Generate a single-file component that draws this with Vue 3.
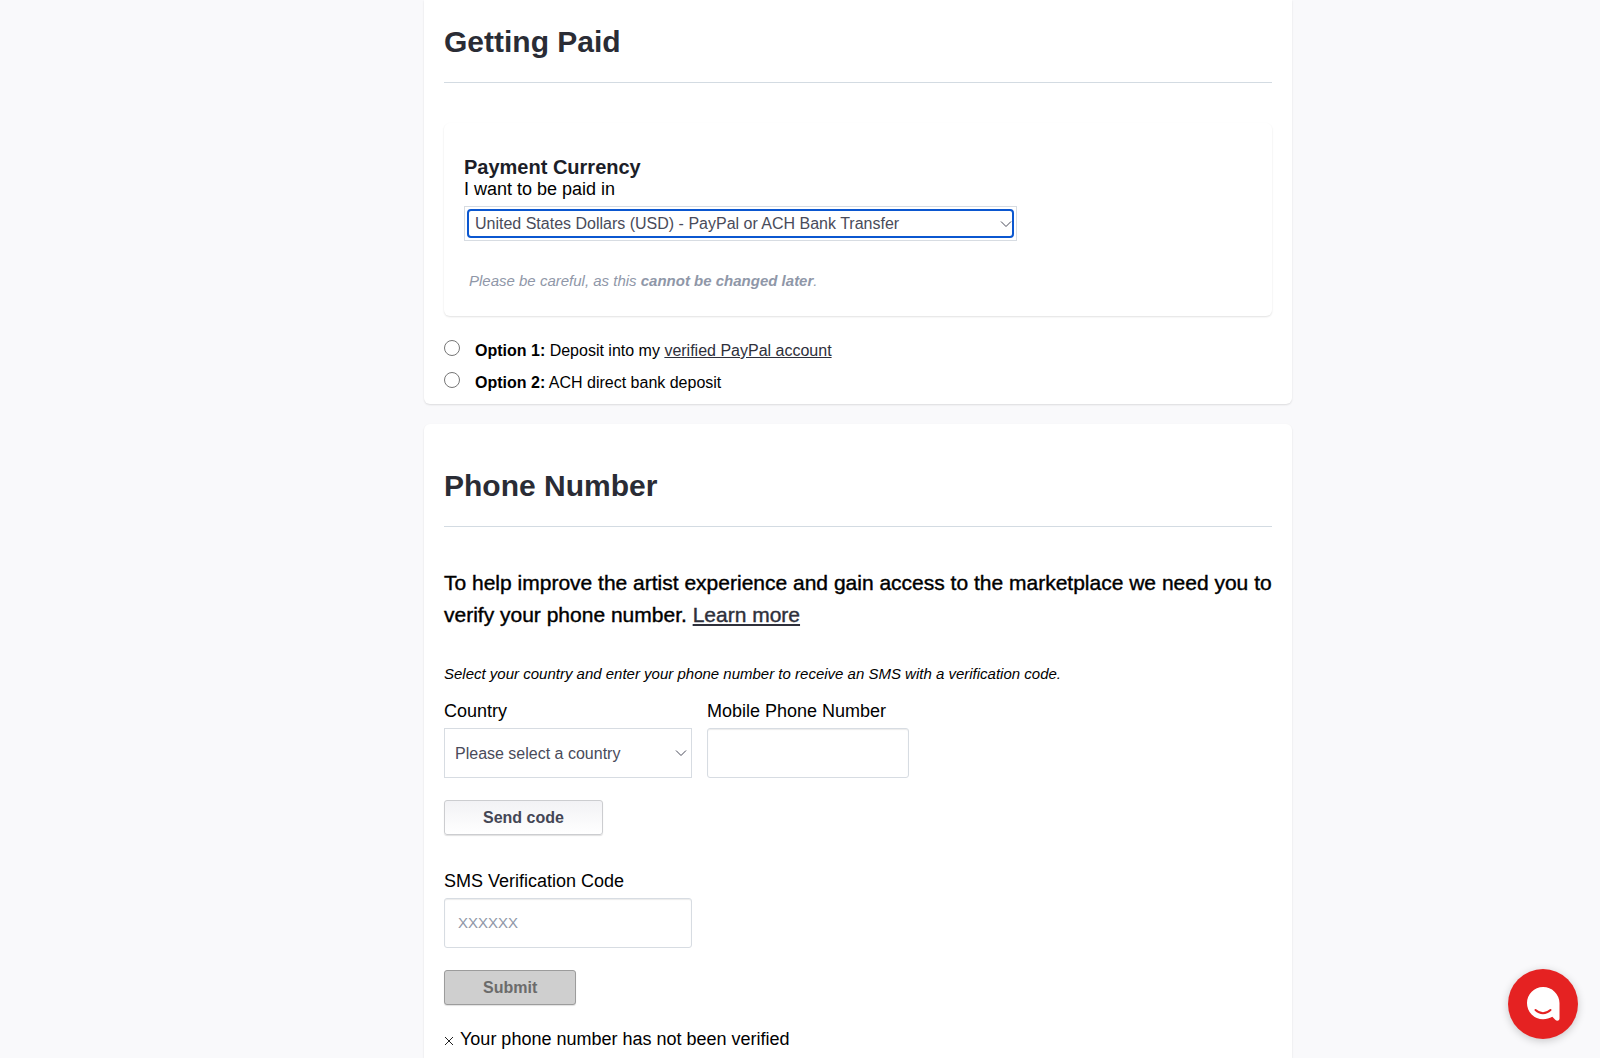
<script setup>
import { ref } from "vue";

const currencies = [
  { code: "USD", label: "United States Dollars (USD) - PayPal or ACH Bank Transfer" },
];
const countries = ["Australia", "Canada", "United Kingdom", "United States"];

const currency = ref("USD");
const payout = ref("");
const country = ref("");
const phone = ref("");
const code = ref("");
</script>

<template>
  <div class="page">
    <main class="content">
      <section class="card card-first">
        <h2>Getting Paid</h2>

        <div class="currency">
          <h3>Payment Currency</h3>
          <label class="label" for="currency">I want to be paid in</label>
          <div class="select select-focus">
            <select id="currency" v-model="currency">
              <option v-for="c in currencies" :key="c.code" :value="c.code">{{ c.label }}</option>
            </select>
            <svg class="chevron" viewBox="0 0 12 8"><path d="M1 1.5l5 5 5-5" /></svg>
          </div>
          <p class="warning">Please be careful, as this <strong>cannot be changed later</strong>.</p>
        </div>

        <div class="options">
          <div class="option">
            <input id="paypal" v-model="payout" type="radio" name="payout" value="paypal" />
            <label for="paypal"><strong>Option 1:</strong> Deposit into my <a href="#">verified PayPal account</a></label>
          </div>
          <div class="option">
            <input id="ach" v-model="payout" type="radio" name="payout" value="ach" />
            <label for="ach"><strong>Option 2:</strong> ACH direct bank deposit</label>
          </div>
        </div>
      </section>

      <section class="card card-last">
        <h2>Phone Number</h2>

        <p class="intro">
          To help improve the artist experience and gain access to the marketplace we need you to
          verify your phone number. <a href="#">Learn more</a>
        </p>
        <p class="hint">Select your country and enter your phone number to receive an SMS with a verification code.</p>

        <div class="fields">
          <div class="field">
            <label class="label" for="country">Country</label>
            <div class="select select-country">
              <select id="country" v-model="country">
                <option value="">Please select a country</option>
                <option v-for="c in countries" :key="c" :value="c">{{ c }}</option>
              </select>
              <svg class="chevron" viewBox="0 0 12 8"><path d="M1 1.5l5 5 5-5" /></svg>
            </div>
          </div>
          <div class="field field-phone">
            <label class="label" for="phone">Mobile Phone Number</label>
            <input id="phone" v-model="phone" class="text" type="tel" />
          </div>
        </div>
        <button type="button" class="btn">Send code</button>

        <div class="field field-code">
          <label class="label" for="code">SMS Verification Code</label>
          <input id="code" v-model="code" class="text" type="text" placeholder="XXXXXX" />
        </div>
        <button type="button" class="btn" disabled>Submit</button>

        <p class="status">
          <svg viewBox="0 0 10 10"><path d="M1 1l8 8M9 1l-8 8" /></svg>
          Your phone number has not been verified
        </p>
      </section>
    </main>

    <button type="button" class="chat" aria-label="Chat">
      <svg viewBox="0 0 34 36">
        <path
          d="M17 1A16 16 0 0 0 1 17a16 16 0 0 0 16 16.200c3.500 0 6.500-.8 9.300-2.400l3.200 3.200c1.500 1.300 4 .6 4-1.600V17A16.400 16.400 0 0 0 17 1z"
          fill="#fff"
        />
        <path d="M9.500 24c4.500 4.200 10.500 4.200 15 0" fill="none" stroke="#e52222" stroke-width="2" stroke-linecap="round" />
      </svg>
    </button>
  </div>
</template>

<style>
body {
  margin: 0;
  background: #f9f9fb;
}
</style>

<style scoped>
* {
  box-sizing: border-box;
}

.page {
  min-height: 100vh;
  display: flex;
  font-family: "Helvetica Neue", "Liberation Sans", Arial, sans-serif;
  font-size: 16px;
  color: #000;
}

.content {
  width: 100%;
  max-width: 984px;
  margin: 0 auto;
  padding-left: 116px;
  display: flex;
  flex-direction: column;
  gap: 20px;
}

.card {
  padding: 40px 20px 6px;
  background: #fff;
  border-radius: 6px;
  box-shadow: 0 1px 2px rgba(0, 0, 0, 0.12);
}

.card-first {
  padding-top: 20px;
  border-radius: 0 0 6px 6px;
}

.card-last {
  flex: 1;
  border-radius: 6px 6px 0 0;
}

h2 {
  margin: 0 0 40px;
  padding-bottom: 18px;
  border-bottom: 1px solid #d3dbe2;
  font-size: 30px;
  line-height: 44px;
  color: #2a2c35;
}

h3,
p {
  margin: 0;
}

h3 {
  font-size: 20px;
  line-height: 22px;
  color: #1c1e28;
}

a {
  color: #2e303b;
}

.label {
  display: block;
  font-size: 18px;
  line-height: 22px;
}

.currency {
  padding: 33px 20px 25px;
  border-radius: 6px;
  box-shadow: 0 1px 2px rgba(0, 0, 0, 0.12);
}

.select {
  position: relative;
  border: 1px solid #d7dce2;
}

.select select {
  width: 100%;
  height: 100%;
  display: block;
  appearance: none;
  border: none;
  outline: none;
  background: #fff;
  padding: 0 28px 0 10px;
  font: inherit;
  color: #494b5a;
}

.select-focus {
  max-width: 553px;
  height: 35px;
  margin-top: 6px;
  padding: 2px;
}

.select-focus select {
  border: 2px solid #0b57d0;
  border-radius: 4px;
  padding-left: 6px;
}

.chevron {
  position: absolute;
  right: 4px;
  top: 50%;
  width: 12px;
  height: 8px;
  margin-top: -4px;
  fill: none;
  stroke: #494b5a;
  pointer-events: none;
}

.warning {
  margin-top: 30px;
  padding-left: 5px;
  font-size: 15px;
  line-height: 20px;
  font-style: italic;
  color: #8f97a8;
}

.options {
  padding-top: 18px;
}

.option {
  display: flex;
  height: 32px;
}

.option input {
  width: 16px;
  height: 16px;
  margin: 6px 15px 0 0;
}

.option label {
  line-height: 34px;
}

.intro {
  font-size: 21px;
  line-height: 32px;
  -webkit-text-stroke: 0.4px;
}

.hint {
  margin-top: 33px;
  font-size: 15px;
  line-height: 20px;
  font-style: italic;
}

.fields {
  display: flex;
  gap: 15px;
  margin: 16px 0 22px;
}

.field {
  width: 248px;
}

.field-phone {
  width: 202px;
}

.field-code {
  margin: 35px 0 22px;
}

.select-country,
.text {
  width: 100%;
  height: 50px;
  margin-top: 6px;
}

.text {
  display: block;
  padding: 0 13px;
  border: 1px solid #d7dce2;
  border-radius: 3px;
  box-shadow: inset 0 1px 1px rgba(0, 0, 0, 0.08);
  font: inherit;
}

.text::placeholder {
  font-size: 15px;
  color: #8f97a8;
}

.btn {
  display: block;
  height: 35px;
  padding: 0 38px;
  border: 1px solid #cccdd0;
  border-radius: 3px;
  background: linear-gradient(#f2f2f5, #fff);
  box-shadow: 0 1px 1px rgba(0, 0, 0, 0.12);
  font: inherit;
  font-weight: 700;
  color: #444655;
}

.btn:disabled {
  background: #cfcfcf;
  border-color: #9c9c9c;
  color: #6b6b6b;
}

.status {
  display: flex;
  align-items: center;
  gap: 6px;
  margin-top: 23px;
  font-size: 18px;
  line-height: 22px;
}

.status svg {
  width: 10px;
  height: 10px;
  margin-top: 3px;
  stroke: #222;
}

.chat {
  position: fixed;
  right: 22px;
  bottom: 19px;
  width: 70px;
  height: 70px;
  padding: 0;
  display: flex;
  align-items: center;
  justify-content: center;
  border: none;
  border-radius: 50%;
  background: #e52222;
  box-shadow: 0 2px 8px rgba(0, 0, 0, 0.2);
}

.chat svg {
  width: 34px;
  height: 36px;
}
</style>
